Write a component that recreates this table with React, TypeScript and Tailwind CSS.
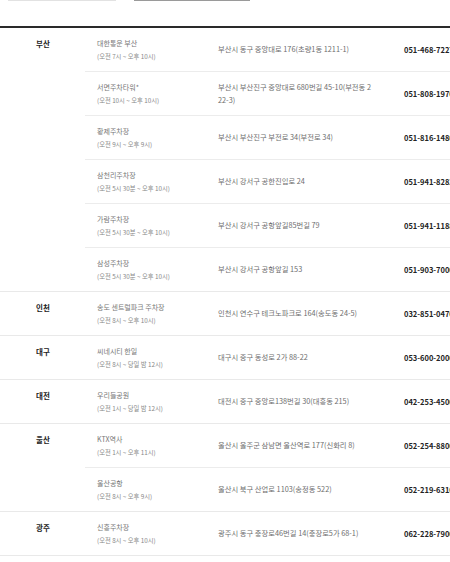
import React from "react";

type Row = { name: string; hours: string; addr: string; phone: string };
type Group = { region: string; rows: Row[] };

const data: Group[] = [
  {
    region: "부산",
    rows: [
      { name: "대한통운 부산", hours: "(오전 7시 ~ 오후 10시)", addr: "부산시 동구 중앙대로 176(초량1동 1211-1)", phone: "051-468-7227" },
      { name: "서면주차타워*", hours: "(오전 10시 ~ 오후 10시)", addr: "부산시 부산진구 중앙대로 680번길 45-10(부전동 222-3)", phone: "051-808-1970" },
      { name: "황제주차장", hours: "(오전 9시 ~ 오후 9시)", addr: "부산시 부산진구 부전로 34(부전로 34)", phone: "051-816-1480" },
      { name: "삼천리주차장", hours: "(오전 5시 30분 ~ 오후 10시)", addr: "부산시 강서구 공한진입로 24", phone: "051-941-8282" },
      { name: "가람주차장", hours: "(오전 5시 30분 ~ 오후 10시)", addr: "부산시 강서구 공항앞길85번길 79", phone: "051-941-1188" },
      { name: "삼성주차장", hours: "(오전 5시 30분 ~ 오후 10시)", addr: "부산시 강서구 공항앞길 153", phone: "051-903-7000" },
    ],
  },
  {
    region: "인천",
    rows: [
      { name: "송도 센트럴파크 주차장", hours: "(오전 8시 ~ 오후 10시)", addr: "인천시 연수구 테크노파크로 164(송도동 24-5)", phone: "032-851-0470" },
    ],
  },
  {
    region: "대구",
    rows: [
      { name: "씨네시티 한일", hours: "(오전 8시 ~ 당일 밤 12시)", addr: "대구시 중구 동성로 2가 88-22", phone: "053-600-2000" },
    ],
  },
  {
    region: "대전",
    rows: [
      { name: "우리들공원", hours: "(오전 1시 ~ 당일 밤 12시)", addr: "대전시 중구 중앙로138번길 30(대흥동 215)", phone: "042-253-4500" },
    ],
  },
  {
    region: "울산",
    rows: [
      { name: "KTX역사", hours: "(오전 1시 ~ 오후 11시)", addr: "울산시 울주군 삼남면 울산역로 177(신화리 8)", phone: "052-254-8800" },
      { name: "울산공항", hours: "(오전 8시 ~ 오후 9시)", addr: "울산시 북구 산업로 1103(송정동 522)", phone: "052-219-6310" },
    ],
  },
  {
    region: "광주",
    rows: [
      { name: "신흥주차장", hours: "(오전 8시 ~ 오후 10시)", addr: "광주시 동구 충장로46번길 14(충장로5가 68-1)", phone: "062-228-7900" },
    ],
  },
];

export default function App() {
  return (
    <div
      className="w-[450px] h-[562px] overflow-hidden bg-white"
      style={{ fontFamily: '"Noto Sans CJK KR", "Noto Sans", sans-serif' }}
    >
      <div className="flex h-px">
        <div className="ml-[8px] w-[108px] h-px bg-[#e2e2e2]" />
        <div className="ml-[18px] w-[116px] h-px bg-[#9a9a9a]" />
      </div>
      <div className="mt-[25px] h-[2px] bg-[#2a2a2a]" />
      {data.map((g) => (
        <div key={g.region} className="flex border-b border-[#e9e9e9]">
          <div className="w-[85px] shrink-0 pl-[36px] pt-[9px] text-[7.5px] leading-[13px] font-bold text-[#222]">
            {g.region}
          </div>
          <div className="flex-1 min-w-0 flex flex-col">
            {g.rows.map((r, i) => (
              <div
                key={r.name}
                className={
                  "flex items-center h-[43px] pl-[12px] whitespace-nowrap " +
                  (i < g.rows.length - 1 ? "border-b border-[#ececec] box-content" : "")
                }
              >
                <div className="w-[121px] shrink-0 flex flex-col">
                  <span className="text-[7px] leading-[13px] text-[#777]">{r.name}</span>
                  <span className="text-[6.3px] leading-[13px] text-[#888]">{r.hours}</span>
                </div>
                <div className="w-[186px] shrink-0 pr-[31px] text-[7.3px] leading-[12.5px] text-[#6e6e6e] whitespace-normal break-all">
                  {r.addr}
                </div>
                <div className="text-[7.5px] font-bold text-[#222] whitespace-nowrap">{r.phone}</div>
              </div>
            ))}
          </div>
        </div>
      ))}
    </div>
  );
}
